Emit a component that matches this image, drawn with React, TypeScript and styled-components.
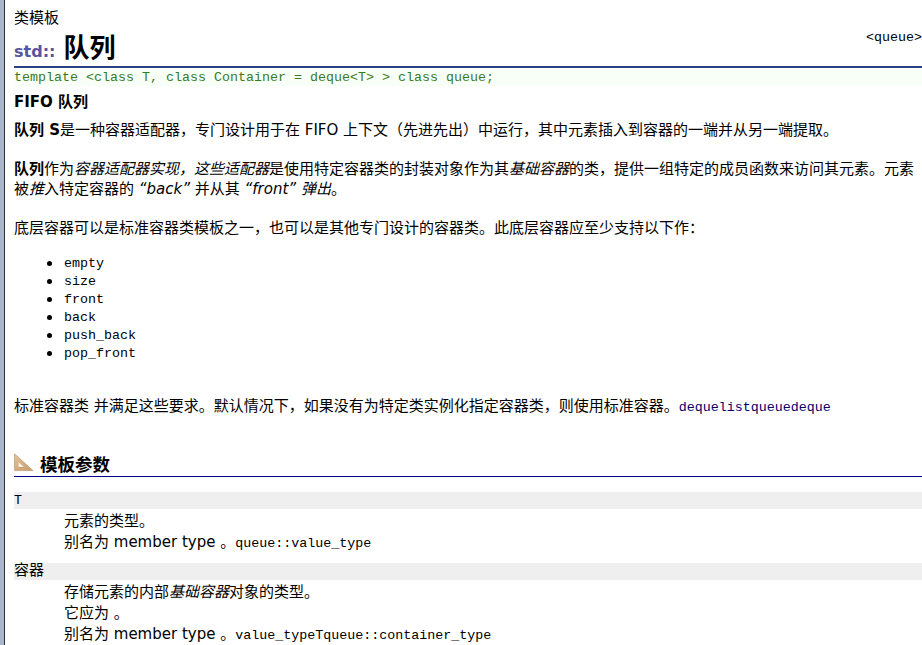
import React from 'react';
import styled, { createGlobalStyle } from 'styled-components';

const SANS = `"DejaVu Sans", "Noto Sans CJK SC", sans-serif`;
const MONO = `"Liberation Mono", "Noto Sans CJK SC", monospace`;

const GlobalStyle = createGlobalStyle`
  html, body {
    margin: 0;
    padding: 0;
    background: #fff;
    overflow: hidden;
  }
`;

const Page = styled.div`
  width: 922px;
  height: 645px;
  overflow: hidden;
  box-sizing: border-box;
  background: #fff;
  border-left: 4px solid #a9b7cc;
  font: 15px/20px ${SANS};
  color: #000;
`;

const Sheet = styled.div`
  height: 100%;
  box-sizing: border-box;
  border-left: 1px solid #333;
  padding: 8px 0 0 9px;
`;

const Kind = styled.div`
  line-height: 20px;
`;

const TitleRow = styled.div`
  display: flex;
  justify-content: space-between;
  height: 38px;
  border-bottom: 2px solid #2b3f85;
`;

const Title = styled.h1`
  margin: 0;
  padding-top: 2px;
  font: bold 26px/36px ${SANS};
`;

const Scope = styled.span`
  font-size: 16px;
  color: #5555a0;
  margin-right: 8px;
`;

const HeaderName = styled.span`
  font: 13.33px/18px ${MONO};
  margin-top: 1px;
`;

const Prototype = styled.pre`
  margin: 0;
  height: 18px;
  background: #f7fff7;
  color: #3c7a1e;
  font: 13.33px/20px ${MONO};
`;

const Lead = styled.div`
  margin-top: 6px;
  font-weight: bold;
  line-height: 20px;
`;

const Para = styled.p<{ $top?: number }>`
  margin: ${({ $top }) => $top ?? 19}px 0 0;
  line-height: 20px;
`;

const Code = styled.code`
  font: 13.33px/18px ${MONO};
`;

const LinkCode = styled(Code)`
  color: #00006b;
`;

const Members = styled.ul`
  margin: 17px 0 0;
  padding: 0 0 0 50px;
  list-style: none;
`;

const Member = styled.li`
  position: relative;
  font: 13.33px/18px ${MONO};

  &::before {
    content: '';
    position: absolute;
    left: -17px;
    top: 6px;
    width: 5px;
    height: 5px;
    border-radius: 50%;
    background: #000;
  }
`;

const Section = styled.h2`
  display: flex;
  align-items: center;
  gap: 6px;
  margin: 37px 0 0;
  height: 22px;
  border-bottom: 1px solid #00008b;
  font: bold 17.5px/22px ${SANS};

  svg {
    margin-top: -6px;
  }
`;

const ParamName = styled.div<{ $top: number; $cjk?: boolean }>`
  margin-top: ${({ $top }) => $top}px;
  height: 17px;
  background: #efefef;
  font: ${({ $cjk }) => ($cjk ? 15 : 13.33)}px/17px ${MONO};
`;

const ParamBody = styled.div`
  margin: 2px 0 0 50px;
  line-height: 21px;
`;

const RulerIcon = () => (
  <svg width="20" height="19" viewBox="0 0 20 19">
    <defs>
      <linearGradient id="wood" x1="0" y1="0" x2="1" y2="1">
        <stop offset="0" stopColor="#e6c49c" />
        <stop offset="1" stopColor="#c39a6b" />
      </linearGradient>
    </defs>
    <path fillRule="evenodd" fill="url(#wood)" stroke="#b58f63" strokeWidth="0.6" d="M0.5 0.8 L19 17.6 L0.5 17.6 Z M4.5 9 L4.5 14 L10 14 Z" />
    <path fill="#f7efe4" d="M4.5 9 L4.5 14 L10 14 Z" />
  </svg>
);

export default function App() {
  return (
    <>
      <GlobalStyle />
      <Page>
        <Sheet>
          <Kind>类模板</Kind>
          <TitleRow>
            <Title><Scope>std::</Scope>队列</Title>
            <HeaderName>&lt;queue&gt;</HeaderName>
          </TitleRow>
          <Prototype>template &lt;class T, class Container = deque&lt;T&gt; &gt; class queue;</Prototype>
          <Lead>FIFO 队列</Lead>
          <Para $top={8}><b>队列 S</b>是一种容器适配器，专门设计用于在 FIFO 上下文（先进先出）中运行，其中元素插入到容器的一端并从另一端提取。</Para>
          <Para><b>队列</b>作为<i>容器适配器实现，这些适配器</i>是使用特定容器类的封装对象作为其<i>基础容器</i>的类，提供一组特定的成员函数来访问其元素。元素被<i>推</i>入特定容器的 <i>“back”</i> 并从其 <i>“front”</i> <i>弹出</i>。</Para>
          <Para>底层容器可以是标准容器类模板之一，也可以是其他专门设计的容器类。此底层容器应至少支持以下作：</Para>
          <Members>
            <Member>empty</Member>
            <Member>size</Member>
            <Member>front</Member>
            <Member>back</Member>
            <Member>push_back</Member>
            <Member>pop_front</Member>
          </Members>
          <Para $top={33}>标准容器类 并满足这些要求。默认情况下，如果没有为特定类实例化指定容器类，则使用标准容器。<LinkCode>dequelistqueuedeque</LinkCode></Para>
          <Section><RulerIcon />模板参数</Section>
          <ParamName $top={15}>T</ParamName>
          <ParamBody>元素的类型。<br />别名为 member type 。<Code>queue::value_type</Code></ParamBody>
          <ParamName $top={10} $cjk>容器</ParamName>
          <ParamBody>存储元素的内部<i>基础容器</i>对象的类型。<br />它应为 。<br />别名为 member type 。<Code>value_typeTqueue::container_type</Code></ParamBody>
        </Sheet>
      </Page>
    </>
  );
}
